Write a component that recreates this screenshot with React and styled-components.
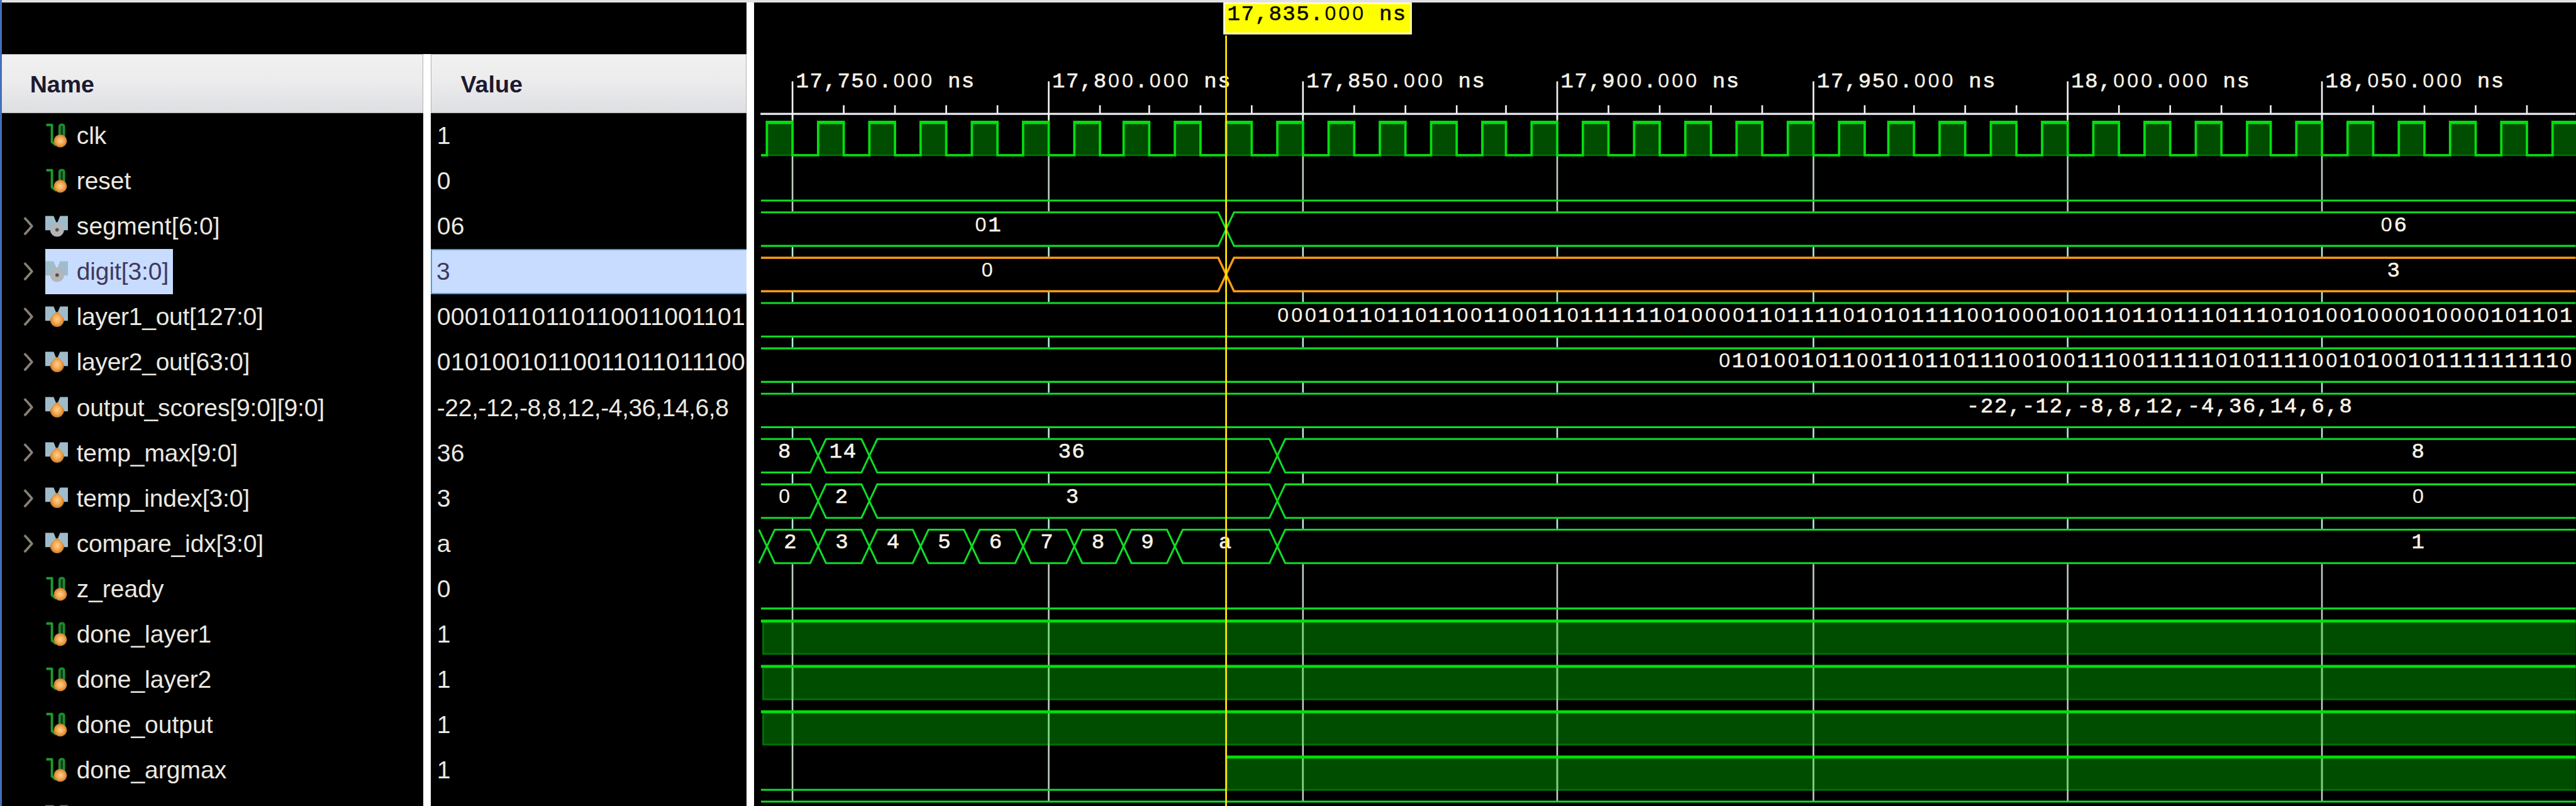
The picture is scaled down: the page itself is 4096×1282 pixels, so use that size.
import React from "react";
import styled, { createGlobalStyle, css } from "styled-components";

/* Design units are converted to CSS pixels with one factor. */
const SCALE = 4096 / 5228;
const u = (n) => `${(n * SCALE).toFixed(3)}px`;

const GlobalStyle = createGlobalStyle`
  html, body, #root { margin: 0; padding: 0; height: 100%; background: #000; overflow: hidden; }
`;

/* ---------- data ---------- */

const SIGNALS = [
  { name: "clk", value: "1", kind: "scalar" },
  { name: "reset", value: "0", kind: "scalar" },
  { name: "segment[6:0]", value: "06", kind: "port", track: 0.3 },
  { name: "digit[3:0]", value: "3", kind: "port", selected: true, track: -0.12 },
  { name: "layer1_out[127:0]", value: "00010110110110011001101", kind: "bus", track: -0.34 },
  { name: "layer2_out[63:0]", value: "01010010110011011011100", kind: "bus", track: -0.35 },
  { name: "output_scores[9:0][9:0]", value: "-22,-12,-8,8,12,-4,36,14,6,8", kind: "bus", track: -0.13, valueTrack: -0.5 },
  { name: "temp_max[9:0]", value: "36", kind: "bus", track: -0.15 },
  { name: "temp_index[3:0]", value: "3", kind: "bus", track: -0.19 },
  { name: "compare_idx[3:0]", value: "a", kind: "bus", track: -0.15 },
  { name: "z_ready", value: "0", kind: "scalar" },
  { name: "done_layer1", value: "1", kind: "scalar" },
  { name: "done_layer2", value: "1", kind: "scalar" },
  { name: "done_output", value: "1", kind: "scalar" },
  { name: "done_argmax", value: "1", kind: "scalar" },
  { name: "", value: "", kind: "next" },
];

const LAYER1 =
  "00010110110110011001101111110100" +
  "001101111010101111001000100110" +
  "11011101110101001000010000101101";
const LAYER2 =
  "010100101100110110111001001110" +
  "01111101011110010100101111111110";

/* k counts 10 ns steps from 17,750 ns */
const timeX = (k) => 1609 + 4 * Math.round(25.868 * k + 0.3);
const CURSOR = timeX(8.5);
const WAVE_LEFT = 1545;
const WAVE_RIGHT = 5228;
const rowTop = (i) => 247 + 92 * i;
const rowLow = (i) => 315 + 92 * i;

const BUSES = [
  { row: 2, cross: [8.5], labels: [["01", 1991], ["06", 4844]] },
  { row: 3, cross: [8.5], color: "#ff9d14", labels: [["0", 2004], ["3", 4858]], thick: true },
  { row: 4, cross: [], labels: [[LAYER1, 2604.6]] },
  { row: 5, cross: [], labels: [[LAYER2, 3500.5]] },
  { row: 6, cross: [], labels: [["-22,-12,-8,8,12,-4,36,14,6,8", 4005]] },
  { row: 7, cross: [0.5, 1.5, 9.5], labels: [["8", 1592.4], ["14", 1697], ["36", 2161], ["8", 4908]] },
  { row: 8, cross: [0.5, 1.5, 9.5], labels: [["0", 1592.4], ["2", 1708.4], ["3", 2176.7], ["0", 4908]] },
  {
    row: 9,
    cross: [-0.5, 0.5, 1.5, 2.5, 3.5, 4.5, 5.5, 6.5, 7.5, 9.5],
    labels: [
      ["2", 1604.5], ["3", 1709], ["4", 1813], ["5", 1917], ["6", 2021],
      ["7", 2125], ["8", 2229], ["9", 2329.4], ["a", 2487], ["1", 4908],
    ],
  },
];

/* ---------- layout ---------- */

const Window = styled.div`
  display: flex;
  width: 4096px;
  height: 1282px;
  background: #000;
  overflow: hidden;
`;

const FocusEdge = styled.div`
  flex: none;
  width: ${u(3.8)};
  background: #4370ba;
`;

const Main = styled.div`
  flex: 1;
  min-width: 0;
  display: flex;
  flex-direction: column;
`;

const TopEdge = styled.div`
  flex: none;
  height: ${u(5)};
  background: #e3e0e3;
`;

const Body = styled.div`
  flex: 1;
  min-height: 0;
  display: flex;
`;

const Table = styled.div`
  flex: none;
  display: flex;
  align-items: stretch;
  padding-top: ${u(104.5)};
  box-sizing: border-box;
`;

const Column = styled.div`
  flex: none;
  width: ${(p) => u(p.$width)};
  overflow: hidden;
  display: flex;
  flex-direction: column;
`;

const Divider = styled.div`
  flex: none;
  width: ${(p) => u(p.$width)};
  background: #fff;
`;

const ColumnHeader = styled.div`
  flex: none;
  box-sizing: border-box;
  height: ${u(119.7)};
  padding-top: ${u(5)};
  padding-left: ${(p) => u(p.$indent)};
  display: flex;
  align-items: center;
  border: solid #b5b1b3;
  border-width: ${u(2)} ${u(2)} ${u(2)} ${(p) => (p.$leftRule ? u(2) : 0)};
  background: linear-gradient(#f1f1f1, #ececed 45%, #dedfe2);
  color: #1b1a30;
  font: bold ${u(48)} / 1 "Liberation Sans", Arial, sans-serif;
`;

const cellText = css`
  font: ${u(49.8)} / 1 "Liberation Sans", Arial, sans-serif;
  color: #ebe8e1;
  white-space: pre;
`;

const NameRow = styled.div`
  flex: none;
  height: ${u(92)};
  display: flex;
  align-items: center;
  padding-left: ${u(38)};
`;

const Expander = styled.div`
  flex: none;
  width: ${u(49.5)};
  display: flex;
  padding-left: ${u(2)};
  box-sizing: border-box;
`;

const NameTag = styled.div`
  ${cellText}
  height: 100%;
  display: flex;
  align-items: center;
  gap: ${u(17)};
  padding-right: ${u(9)};
  letter-spacing: ${(p) => u(p.$track || 0)};
  ${(p) => p.$selected && css`background: #c8dcff; color: #40395c;`}
`;

const ValueRow = styled.div`
  ${cellText}
  flex: none;
  box-sizing: border-box;
  height: ${u(92)};
  display: flex;
  align-items: center;
  padding-left: ${u(12)};
  letter-spacing: ${(p) => u(p.$track ?? 0.32)};
  ${(p) => p.$selected && css`
    background: #c8dcff;
    color: #40395c;
    border: solid #459fe2;
    border-width: ${u(3.5)} 0 ${u(3.5)} ${u(3.5)};
    padding-left: ${u(8.5)};
  `}
`;

const Glyph = styled.svg`
  flex: none;
  display: block;
  width: ${(p) => u(p.$w)};
  height: ${(p) => u(p.$h)};
`;

const WavePane = styled.div`
  flex: 1;
  min-width: 0;
  background: #000;
`;

const WaveCanvas = styled.svg`
  display: block;
  width: 100%;
  height: 100%;
`;

const WaveText = styled.text`
  font-family: "Liberation Mono", "Courier New", monospace;
  font-size: 43.4px;
  text-anchor: middle;
  fill: ${(p) => p.$color || "#f8f2e8"};
  stroke: ${(p) => p.$color || "#f8f2e8"};
  stroke-width: 0.8px;
`;

const Zero = styled.tspan`
  font-family: "Liberation Sans", Arial, sans-serif;
  font-size: 41px;
  stroke-width: 0.2px;
`;

/* ---------- icons ---------- */

const Chevron = () => (
  <Glyph $w={26} $h={40} viewBox="0 0 26 40">
    <path d="M6 3 C11 7 15 13 21.5 20 C15 27 11 33 6 37" fill="none" stroke="#878075" strokeWidth="4.8" strokeLinejoin="round" />
  </Glyph>
);

const ScalarIcon = () => (
  <Glyph $w={47} $h={50} viewBox="0 0 47 50">
    <path d="M2 3.5 H13.5 V38 L22 45" fill="none" stroke="#1f9a2e" strokeWidth="5" strokeLinejoin="round" />
    <path d="M29 32 V7 Q29 3 33.5 3 Q38 3 38 7 V34" fill="#0c4416" stroke="#218a30" strokeWidth="4.6" />
    <ellipse cx="30.5" cy="36" rx="13.4" ry="13" fill="url(#ball)" />
  </Glyph>
);

const BusIcon = ({ kind }) => (
  <Glyph $w={47} $h={46} viewBox="0 0 47 46">
    <g fill={kind === "next" ? "#5b6672" : "#9fbccb"}>
      <path d="M0 2 H17 L24 19 L15 31 H0 Z" />
      <path d="M47 2 H30 L23 19 L32 31 H47 Z" />
    </g>
    {kind === "port" ? (
      <>
        <path d="M24 14 C30 18 38 24 38 30 A14 14 0 0 1 10 30 C10 24 18 18 24 14 Z" fill="#b3b5b9" />
        <circle cx="24" cy="30" r="3.6" fill="#55504e" />
      </>
    ) : (
      <path d="M24 12 C29 16 38 23 38 29.5 A14 14 0 0 1 10 29.5 C10 23 19 16 24 12 Z" fill="url(#ball)" />
    )}
  </Glyph>
);

const IconDefs = () => (
  <defs>
    <radialGradient id="ball" cx="0.5" cy="0.5" r="0.55">
      <stop offset="0" stopColor="#ffd094" />
      <stop offset="0.55" stopColor="#f3a54c" />
      <stop offset="1" stopColor="#bb7226" />
    </radialGradient>
  </defs>
);

/* ---------- wave drawing ---------- */

/* One cell per character; x is the centre of the first cell. */
const MonoLabel = ({ x, y, text, color }) => (
  <WaveText
    $color={color}
    x={[...text].map((_, i) => (x + 28 * i).toFixed(1)).join(" ")}
    y={y}
  >
    {text.split(/(0+)/).filter(Boolean).map((run, i) =>
      run[0] === "0" ? <Zero key={i}>{run}</Zero> : run
    )}
  </WaveText>
);

const busPath = (xs, edge, mid) => {
  let d = xs[0] < 1560 ? `M1541 ${edge}` : `M${WAVE_LEFT} ${edge}`;
  xs.forEach((x) => {
    d += ` H${x - 16} L${x} ${mid} L${x + 16} ${edge}`;
  });
  return `${d} H${WAVE_RIGHT}`;
};

const BusTrace = ({ bus }) => {
  const top = rowTop(bus.row);
  const low = rowLow(bus.row);
  const mid = (top + low) / 2;
  const xs = bus.cross.map(timeX);
  return (
    <g>
      <g fill="none" stroke={bus.color || "#0edc26"} strokeWidth={bus.thick ? 4.4 : 3.9}>
        <path d={busPath(xs, top, mid)} />
        <path d={busPath(xs, low, mid)} />
      </g>
      {bus.labels.map(([text, x]) => (
        <MonoLabel key={x} x={x} y={top + 38.3} text={text} />
      ))}
    </g>
  );
};

const Clock = () => {
  const pulses = Array.from({ length: 36 }, (_, k) => [timeX(k - 0.5), timeX(k)]);
  let line = `M${WAVE_LEFT} 315`;
  pulses.forEach(([a, b]) => {
    line += ` H${a} V248 H${b} V315`;
  });
  return (
    <g>
      {pulses.map(([a, b]) => (
        <g key={a}>
          <rect x={a} y="247" width={b - a} height="69.5" fill="#004d00" />
          <rect x={a} y="313" width={b - a} height="3.6" fill="#006e06" />
        </g>
      ))}
      <path d={line} fill="none" stroke="#04de10" strokeWidth="4.8" />
      {pulses.map(([a, b]) => (
        <rect key={a} x={a - 2} y="245" width={b - a + 4} height="6.8" fill="#00e008" />
      ))}
    </g>
  );
};

const HighLevel = ({ row, from }) => (
  <g>
    <rect x={from} y={rowTop(row)} width={WAVE_RIGHT - from} height="70" fill="#004d00" />
    <path d={`M${from + 1.5} ${rowTop(row)} V${rowLow(row)} H${WAVE_RIGHT}`} fill="none" stroke="#007008" strokeWidth="3.4" />
  </g>
);

const GRID = [0, 5, 10, 15, 20, 25, 30];
const GRID_GAPS = [
  [231, 429], [501, 521], [593, 613], [685, 705], [777, 797],
  [869, 889], [961, 981], [1053, 1073], [1145, 1627],
];
const LABELS = ["17,750", "17,800", "17,850", "17,900", "17,950", "18,000", "18,050"];

const Ruler = () => (
  <g>
    {Array.from({ length: 36 }, (_, k) => k).filter((k) => k % 5).map((k) => (
      <path key={k} d={`M${timeX(k)} 213.5 V231`} stroke="#f4f2f0" strokeWidth="3.4" />
    ))}
    <path d={`M1544 231 H${WAVE_RIGHT}`} stroke="#ececf6" strokeWidth="4.2" />
    {GRID.map((k, i) => (
      <g key={k}>
        <path d={`M${timeX(k)} 165 V243`} stroke="#f2f6f2" strokeWidth="3.4" />
        <MonoLabel x={timeX(k) + 20} y={177} text={`${LABELS[i]}.000 ns`} />
      </g>
    ))}
  </g>
);

const Waves = () => (
  <WaveCanvas viewBox="1531 5 3697 1631" preserveAspectRatio="none">
    {[11, 12, 13].map((r) => <HighLevel key={r} row={r} from={1548} />)}
    <HighLevel row={14} from={CURSOR} />
    <g strokeWidth="3.3">
      {GRID.map((k) => (
        <g key={k}>
          {GRID_GAPS.map(([a, b]) => (
            <path key={a} d={`M${timeX(k)} ${a} V${b}`} stroke={b - a < 30 ? "#b4eee4" : "#c0d0c2"} />
          ))}
          {[11, 12, 13, 14].filter((r) => r < 14 || timeX(k) > CURSOR).map((r) => (
            <path key={r} d={`M${timeX(k)} ${rowTop(r)} V${rowLow(r)}`} stroke="#72d472" />
          ))}
        </g>
      ))}
    </g>
    <Ruler />
    <Clock />
    <g fill="none" stroke="#0edc26" strokeWidth="3.9">
      {[1, 10].map((r) => <path key={r} d={`M${WAVE_LEFT} ${rowLow(r)} H${WAVE_RIGHT}`} />)}
      <path d={`M${WAVE_LEFT} ${rowTop(15)} H${WAVE_RIGHT}`} />
      <path d={`M${WAVE_LEFT} ${rowLow(14)} H${CURSOR}`} />
    </g>
    <g fill="none" stroke="#00e008" strokeWidth="6">
      {[11, 12, 13].map((r) => <path key={r} d={`M${WAVE_LEFT} ${rowTop(r) + 1.5} H${WAVE_RIGHT}`} />)}
      <path d={`M${CURSOR} ${rowTop(14) + 1.5} H${WAVE_RIGHT}`} />
    </g>
    {BUSES.map((b) => <BusTrace key={b.row} bus={b} />)}
    <path d={`M${CURSOR} 72 V1636`} stroke="#ffe500" strokeWidth="3.6" />
    <rect x="2483.3" y="5" width="382.7" height="64.8" fill="#ffffd8" />
    <rect x="2487" y="8" width="376" height="58" fill="#ffff00" />
    <MonoLabel x={2504.6} y={41} text="17,835.000 ns" color="#0a0a00" />
  </WaveCanvas>
);

/* ---------- app ---------- */

export default function App() {
  return (
    <>
      <GlobalStyle />
      <Window>
        <FocusEdge />
        <Main>
          <TopEdge />
          <Body>
            <Table>
              <Column $width={855}>
                <ColumnHeader $indent={57}>Name</ColumnHeader>
                {SIGNALS.map((s) => (
                  <NameRow key={s.name}>
                    <Expander>{(s.kind === "bus" || s.kind === "port") && <Chevron />}</Expander>
                    <NameTag $selected={s.selected} $track={s.track}>
                      {s.kind === "scalar" ? <ScalarIcon /> : <BusIcon kind={s.kind} />}
                      {s.name}
                    </NameTag>
                  </NameRow>
                ))}
              </Column>
              <Divider $width={16} />
              <Column $width={639.7}>
                <ColumnHeader $indent={59} $leftRule>Value</ColumnHeader>
                {SIGNALS.map((s) => (
                  <ValueRow key={s.name} $selected={s.selected} $track={s.valueTrack}>{s.value}</ValueRow>
                ))}
              </Column>
            </Table>
            <Divider $width={16.5} />
            <WavePane>
              <Waves />
            </WavePane>
          </Body>
        </Main>
      </Window>
      <svg width="0" height="0">
        <IconDefs />
      </svg>
    </>
  );
}
